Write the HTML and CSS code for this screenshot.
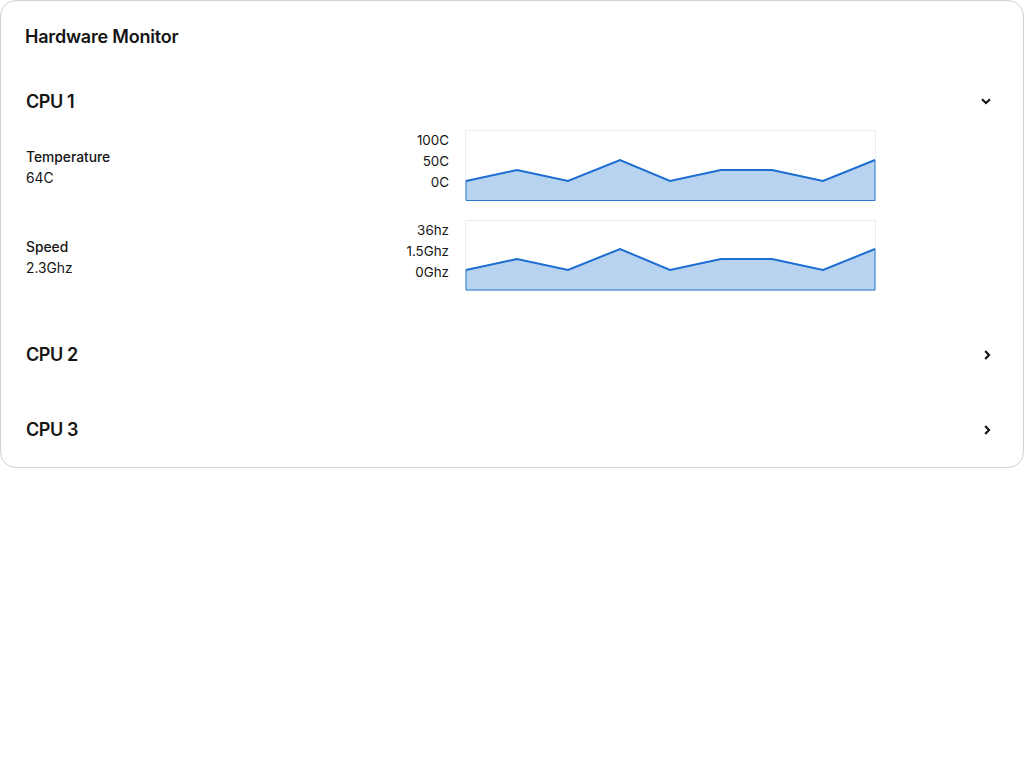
FILE: index.html
```html
<!DOCTYPE html>
<html lang="en">
<head>
<meta charset="utf-8">
<title>Hardware Monitor</title>
<link rel="stylesheet" href="styles.css">
</head>
<body>
<div class="card">
  <div class="card-title">Hardware Monitor</div>
  <div class="accordion">
    <div class="item">
      <div class="toggle">
        <span class="toggle-text">CPU 1</span>
        <svg class="chev" width="10" height="7" viewBox="0 0 10 7"><path d="M1 1.2 L5 5 L9 1.2" fill="none" stroke="#151515" stroke-width="2.2"/></svg>
      </div>
      <div class="body">
        <div class="row">
          <dl class="desc"><dt>Temperature</dt><dd>64C</dd></dl>
          <div class="ticks"><span>100C</span><span>50C</span><span>0C</span></div>
          <svg class="chart" width="411" height="71" viewBox="0 0 411 71">
            <rect x="0.5" y="0.5" width="410" height="70" fill="#fff" stroke="#ececec"/>
            <path d="M1 51 L52 40 L103 51 L155 30 L205 51 L256 40 L307 40 L358 51 L410 30 L410 70.5 L1 70.5 Z" fill="#b8d3f0" stroke="#2b7bd6" stroke-width="1"/>
            <path d="M1 51 L52 40 L103 51 L155 30 L205 51 L256 40 L307 40 L358 51 L410 30" fill="none" stroke="#1f6fd3" stroke-width="2"/>
          </svg>
        </div>
        <div class="row">
          <dl class="desc"><dt>Speed</dt><dd>2.3Ghz</dd></dl>
          <div class="ticks"><span>36hz</span><span>1.5Ghz</span><span>0Ghz</span></div>
          <svg class="chart" width="411" height="71" viewBox="0 0 411 71">
            <rect x="0.5" y="0.5" width="410" height="70" fill="#fff" stroke="#ececec"/>
            <path d="M1 50 L52 39 L103 50 L155 29 L205 50 L256 39 L307 39 L358 50 L410 29 L410 70 L1 70 Z" fill="#b8d3f0" stroke="#2b7bd6" stroke-width="1"/>
            <path d="M1 50 L52 39 L103 50 L155 29 L205 50 L256 39 L307 39 L358 50 L410 29" fill="none" stroke="#1f6fd3" stroke-width="2"/>
          </svg>
        </div>
      </div>
    </div>
    <div class="item">
      <div class="toggle">
        <span class="toggle-text">CPU 2</span>
        <svg class="chev" width="7" height="10" viewBox="0 0 7 10"><path d="M1.2 1 L5 5 L1.2 9" fill="none" stroke="#151515" stroke-width="2.2"/></svg>
      </div>
    </div>
    <div class="item">
      <div class="toggle">
        <span class="toggle-text">CPU 3</span>
        <svg class="chev" width="7" height="10" viewBox="0 0 7 10"><path d="M1.2 1 L5 5 L1.2 9" fill="none" stroke="#151515" stroke-width="2.2"/></svg>
      </div>
    </div>
  </div>
</div>
</body>
</html>
```
FILE: styles.css
```css
* { box-sizing: border-box; }
body {
  margin: 0;
  font-family: "Inter", "Noto Sans", sans-serif;
  color: #151515;
  background: #fff;
}
.card {
  width: 1024px;
  border: 1px solid #d2d2d2;
  border-radius: 16px;
  background: #fff;
}
.card-title {
  padding: 24px 24px 15px;
  line-height: 24px;
  font-size: 18px;
  font-weight: 600;
  letter-spacing: -0.2px;
}
.item {
  padding-bottom: 9px;
}
.toggle {
  display: flex;
  align-items: center;
  justify-content: space-between;
  padding: 25px 32px 16px 25px;
  line-height: 25px;
  height: 66px;
}
.toggle-text {
  font-size: 18px;
  font-weight: 600;
  letter-spacing: -0.4px;
}
.chev { display: block; }
.body {
  padding: 0 24px 17px 25px;
  display: flex;
  flex-direction: column;
  gap: 19px;
}
.row {
  display: flex;
  align-items: center;
}
.desc {
  margin: 0;
  width: 359px;
  padding-top: 4px;
  font-size: 13.8px;
  line-height: 21px;
}
.desc dt { font-weight: 500; }
.desc dd { margin: 0; }
.ticks {
  width: 64px;
  align-self: flex-start;
  display: flex;
  flex-direction: column;
  align-items: flex-end;
  font-size: 13.4px;
  line-height: 21px;
  margin-right: 16px;
}
.chart { display: block; }
```
